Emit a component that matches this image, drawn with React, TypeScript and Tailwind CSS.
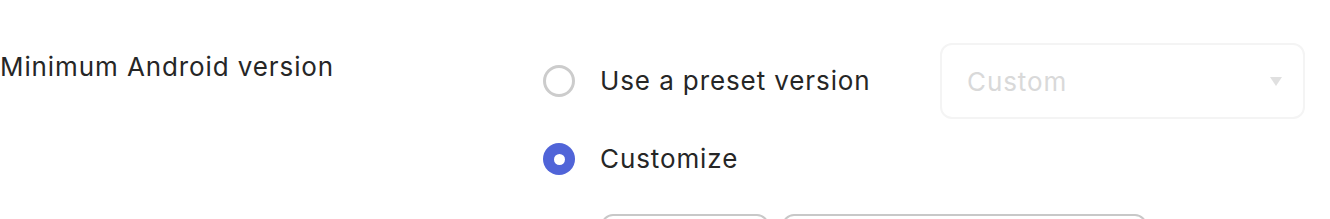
export default function App() {
  return (
    <div className="w-[1330px] h-[219px] overflow-hidden bg-white font-['Inter',sans-serif] text-[#262626] tracking-[0.9px]">
      <div className="flex pt-[43px]">
        {/* Label */}
        <div className="w-[543px] shrink-0 pt-[7px] text-[26px] leading-[34px]">
          Minimum Android version
        </div>

        {/* Options */}
        <div className="flex flex-col">
          <div className="flex items-center h-[76px]">
            <span className="w-[32px] h-[32px] rounded-full border-[3px] border-[#cccccc]" />
            <span className="ml-[25px] w-[340px] text-[26px] leading-[34px]">Use a preset version</span>
            <div className="flex items-center justify-between w-[365px] h-[76px] rounded-[12px] border-2 border-[#f4f4f4] pl-[25px] pr-[21px]">
              <span className="text-[26px] text-[#d9d9d9]">Custom</span>
              <svg width="12" height="9" viewBox="0 0 12 9">
                <path d="M0 0H12L6 9Z" fill="#e0e0e0" />
              </svg>
            </div>
          </div>
          <div className="flex items-center h-[32px] mt-[24px]">
            <span className="flex items-center justify-center w-[32px] h-[32px] rounded-full bg-[#5064d8]">
              <span className="w-[11px] h-[11px] rounded-full bg-white" />
            </span>
            <span className="ml-[25px] text-[26px] leading-[34px]">Customize</span>
          </div>
          <div className="flex gap-[13px] mt-[39px] ml-[58px]">
            <div className="w-[168px] h-[40px] rounded-[12px] border-2 border-[#c8c8c8]" />
            <div className="w-[365px] h-[40px] rounded-[12px] border-2 border-[#c8c8c8]" />
          </div>
        </div>
      </div>
    </div>
  );
}
